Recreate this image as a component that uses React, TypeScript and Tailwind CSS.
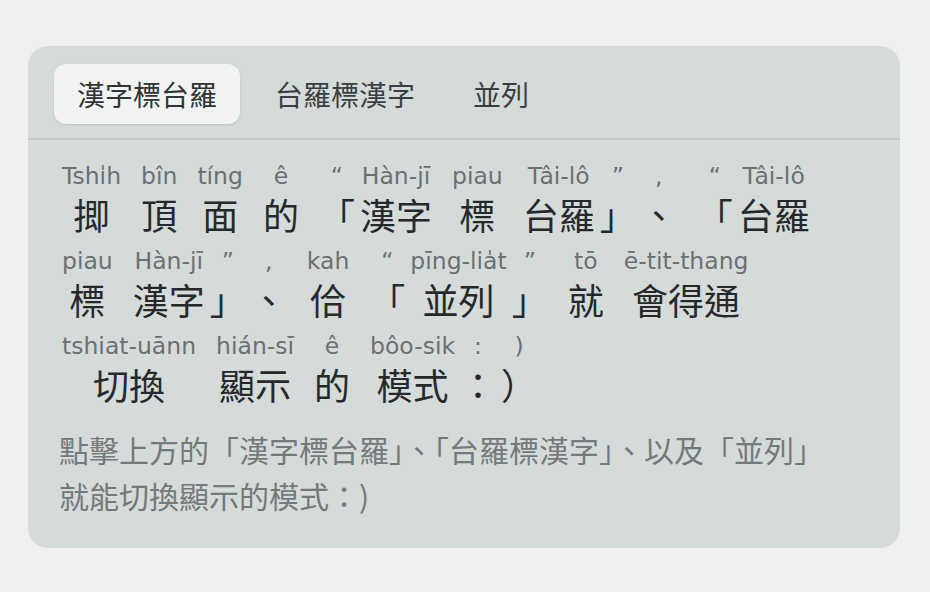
import React from "react"

type Seg = { rt: string; han: string }

const lines: Seg[][] = [
  [
    { rt: "Tshi̍h", han: "揤" },
    { rt: "bîn", han: "頂" },
    { rt: "tíng", han: "面" },
    { rt: "ê", han: "的" },
    { rt: "“", han: "「" },
    { rt: "Hàn-jī", han: "漢字" },
    { rt: "piau", han: "標" },
    { rt: "Tâi-lô", han: "台羅" },
    { rt: "”", han: "」" },
    { rt: ",", han: "、" },
    { rt: "“", han: "「" },
    { rt: "Tâi-lô", han: "台羅" },
  ],
  [
    { rt: "piau", han: "標" },
    { rt: "Hàn-jī", han: "漢字" },
    { rt: "”", han: "」" },
    { rt: ",", han: "、" },
    { rt: "kah", han: "佮" },
    { rt: "“", han: "「" },
    { rt: "pīng-lia̍t", han: "並列" },
    { rt: "”", han: "」" },
    { rt: "tō", han: "就" },
    { rt: "ē-tit-thang", han: "會得通" },
  ],
  [
    { rt: "tshiat-uānn", han: "切換" },
    { rt: "hián-sī", han: "顯示" },
    { rt: "ê", han: "的" },
    { rt: "bôo-sik", han: "模式" },
    { rt: ":", han: "：" },
    { rt: ")", han: "）" },
  ],
]

const closing = ["」", "、", "：", "）"]

const tabs = ["漢字標台羅", "台羅標漢字", "並列"]

function RubyLine({ segs }: { segs: Seg[] }) {
  return (
    <div className="flex items-start">
      {segs.map((s, i) => {
        // punctuation hugs its neighbour, words keep a wide gap
        const tight = i > 0 && (segs[i - 1].han === "「" || closing.includes(s.han))
        const ml = i === 0 ? "" : tight ? "ml-[5px]" : "ml-5"
        return (
          <div key={i} className={`flex flex-col items-center ${ml}`}>
            <span className="whitespace-nowrap font-['DejaVu_Sans',sans-serif] text-[23.5px] leading-[28px] text-[#6b7073]">
              {s.rt}
            </span>
            <span className="mt-1 whitespace-nowrap font-['Noto_Sans_CJK_TC',sans-serif] text-[36px] leading-[40px] text-[#25292b] [text-spacing-trim:space-all]">
              {s.han}
            </span>
          </div>
        )
      })}
    </div>
  )
}

export default function App() {
  return (
    <div className="min-h-screen bg-[#efefef] pt-[46px] pl-[28px]">
      <div className="w-[872px] overflow-hidden rounded-[20px] bg-[#d5dbd9]">
        {/* Tabs */}
        <div className="flex gap-3 border-b-2 border-[#c2c9c7] px-[26px] pt-[18px] pb-[14px] font-['Noto_Sans_CJK_TC',sans-serif]">
          {tabs.map((t, i) => (
            <button
              key={t}
              className={
                i === 0
                  ? "flex h-[60px] items-center rounded-xl bg-[#f1f3f3] px-[23px] text-[28px] text-[#2f3437] shadow-sm"
                  : "flex h-[60px] items-center rounded-xl px-[23px] text-[28px] text-[#3a3f43]"
              }
            >
              {t}
            </button>
          ))}
        </div>

        {/* Ruby text */}
        <div className="px-[34px] pt-[22px] pb-[30px]">
          <div className="flex flex-col gap-[13px]">
            {lines.map((l, i) => (
              <RubyLine key={i} segs={l} />
            ))}
          </div>
          <p className="mt-[22px] -ml-[3px] font-['Noto_Sans_CJK_TC',sans-serif] text-[30px] leading-[46px] text-[#747979]">
            點擊上方的「漢字標台羅」、「台羅標漢字」、以及「並列」
            <br />
            就能切換顯示的模式：)
          </p>
        </div>
      </div>
    </div>
  )
}
